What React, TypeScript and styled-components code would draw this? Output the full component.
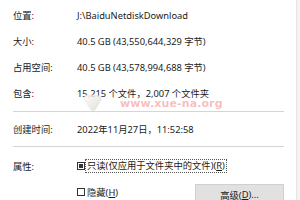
import styled, { createGlobalStyle } from 'styled-components';

const GlobalStyle = createGlobalStyle`
  html, body {
    margin: 0;
    padding: 0;
    background: #ffffff;
  }
  body {
    width: 300px;
    height: 200px;
    overflow: hidden;
    font-family: 'Noto Sans', 'Noto Sans CJK SC', sans-serif;
    font-size: 9.3px;
    color: #1a1a1a;
  }
`;

const rows = [
  { label: '位置:', value: 'J:\\BaiduNetdiskDownload' },
  { label: '大小:', value: '40.5 GB (43,550,644,329 字节)' },
  { label: '占用空间:', value: '40.5 GB (43,578,994,688 字节)' },
  { label: '包含:', value: '15,215 个文件，2,007 个文件夹' },
];

const App = () => (
  <>
    <GlobalStyle />
    <Window>
      <Panel>
        <Section $top={2}>
          {rows.map((row) => (
            <Row key={row.label} $height={26}>
              <Label>{row.label}</Label>
              <Value>{row.value}</Value>
            </Row>
          ))}
        </Section>
        <Divider $top={5} />
        <Row $height={37}>
          <Label>创建时间:</Label>
          <Value>2022年11月27日，11:52:58</Value>
        </Row>
        <Divider />
        <Section $top={12}>
          <Row $height={14}>
            <Label>属性:</Label>
            <CheckLine>
              <CheckBox $mixed />
              <Focus>
                只读(仅应用于文件夹中的文件)(<u>R</u>)
              </Focus>
            </CheckLine>
          </Row>
          <Row $height={24} $top={3}>
            <span />
            <CheckLine>
              <CheckBox />
              <Caption>
                隐藏(<u>H</u>)
              </Caption>
              <Button>
                高级(<u>D</u>)...
              </Button>
            </CheckLine>
          </Row>
        </Section>
      </Panel>
      <Edge />
      <Watermark>
        <svg width="24" height="24" viewBox="0 0 24 24">
          <defs>
            <linearGradient id="wm" x1="0" y1="0" x2="1" y2="1">
              <stop offset="0" stopColor="#ffffff" />
              <stop offset="1" stopColor="#d8d8d0" />
            </linearGradient>
          </defs>
          <path
            d="M3 8 Q4 4 9 5 L18 6 Q21 7 20 10 L14 20 Q12 22 10 20 Z"
            fill="url(#wm)"
            stroke="#e4e4de"
            strokeWidth="0.8"
            opacity="0.85"
          />
        </svg>
        <WatermarkText>www.xue-na.org</WatermarkText>
      </Watermark>
    </Window>
  </>
);

export default App;

const Window = styled.div`
  position: relative;
  display: flex;
  width: 300px;
  height: 200px;
  overflow: hidden;
`;

const Panel = styled.div`
  width: 271px;
  padding-left: 13px;
  display: flex;
  flex-direction: column;
`;

const Edge = styled.div`
  margin-left: 12px;
  flex: 1;
  background: #f3f3f3;
  border-left: 1px solid #e4e4e4;
`;

const Section = styled.div<{ $top?: number }>`
  display: flex;
  flex-direction: column;
  padding-top: ${({ $top }) => $top ?? 0}px;
`;

const Row = styled.div<{ $height: number; $top?: number }>`
  display: grid;
  grid-template-columns: 64px 1fr;
  align-items: center;
  height: ${({ $height }) => $height}px;
  margin-top: ${({ $top }) => $top ?? 0}px;
  white-space: nowrap;
`;

const Label = styled.span`
  color: #1a1a1a;
`;

const Value = styled.span`
  color: #1a1a1a;
`;

const Divider = styled.div<{ $top?: number }>`
  height: 1px;
  margin-top: ${({ $top }) => $top ?? 0}px;
  background: #d5d5d5;
`;

const CheckLine = styled.div`
  display: flex;
  align-items: center;
  height: 100%;
`;

const CheckBox = styled.span<{ $mixed?: boolean }>`
  position: relative;
  box-sizing: border-box;
  width: 8px;
  height: 8px;
  border: 1px solid #333333;
  background: #ffffff;
  margin-right: 1px;

  &::after {
    content: '';
    display: ${({ $mixed }) => ($mixed ? 'block' : 'none')};
    position: absolute;
    left: 1px;
    top: 1px;
    width: 4px;
    height: 4px;
    background: #333333;
  }
`;

const Focus = styled.span`
  padding: 0 1px;
  line-height: 12px;
  outline: 1px dotted #555555;
  outline-offset: 0;
`;

const Caption = styled.span`
  padding: 0 1px;
`;

const Button = styled.div`
  box-sizing: border-box;
  margin-left: auto;
  margin-top: 8px;
  width: 89px;
  height: 24px;
  display: flex;
  align-items: flex-start;
  justify-content: center;
  padding-top: 3px;
  background: #e1e1e1;
  border: 1px solid #d0d0d0;
`;

const Watermark = styled.div`
  position: absolute;
  left: 81px;
  top: 90px;
  display: flex;
  align-items: center;
  pointer-events: none;
`;

const WatermarkText = styled.span`
  margin-left: 15px;
  margin-top: 3px;
  font-family: 'DejaVu Sans', sans-serif;
  font-weight: bold;
  font-size: 11px;
  color: rgba(238, 110, 110, 0.45);
  letter-spacing: 0.1px;
`;
